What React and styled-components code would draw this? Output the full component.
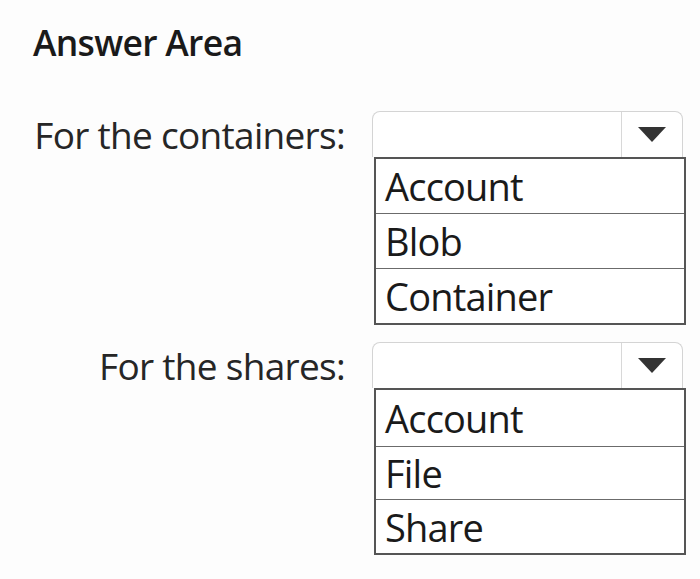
import React from "react";
import styled, { createGlobalStyle } from "styled-components";

const Global = createGlobalStyle`
  html, body {
    margin: 0;
    padding: 0;
    background: #fdfdfd;
  }
  body {
    font-family: "Open Sans", "Noto Sans", "Liberation Sans", sans-serif;
    color: #1c1c1c;
  }
`;

const Page = styled.div`
  width: 700px;
  height: 579px;
  box-sizing: border-box;
  padding: 20px 0 0 33px;
  overflow: hidden;
`;

const Title = styled.h2`
  margin: 0 0 47px 0;
  font-size: 35.5px;
  font-weight: 600;
  line-height: 44px;
  letter-spacing: -0.7px;
  color: #1a1a1a;
`;

const Fields = styled.div`
  display: flex;
  flex-direction: column;
  gap: 17px;
`;

const Field = styled.div`
  display: grid;
  grid-template-columns: 312px 314px;
  column-gap: 27px;
  align-items: start;
`;

const Label = styled.div`
  height: 46px;
  display: flex;
  align-items: center;
  justify-content: flex-end;
  font-size: 37px;
  letter-spacing: -0.7px;
  color: #262626;
  white-space: nowrap;
`;

const Dropdown = styled.div`
  display: flex;
  flex-direction: column;
`;

const Select = styled.div`
  height: 46px;
  width: 311px;
  box-sizing: border-box;
  border: 1px solid #d4d4d4;
  border-bottom: none;
  border-radius: 8px 8px 0 0;
  background: #fff;
  display: flex;
  justify-content: flex-end;
`;

const Arrow = styled.div`
  width: 61px;
  border-left: 1.5px solid #d8d8d8;
  display: flex;
  justify-content: center;
  padding-top: 15px;
  box-sizing: border-box;
`;

const Options = styled.div`
  margin-left: 2px;
  width: 312px;
  box-sizing: border-box;
  border: 2px solid #555;
  background: #fff;
`;

const Option = styled.div`
  height: ${(p) => p.$h}px;
  box-sizing: border-box;
  padding-left: 9px;
  display: flex;
  align-items: center;
  font-size: 38px;
  letter-spacing: -0.8px;
  color: #1a1a1a;
  & + & {
    border-top: 1.5px solid #6b6b6b;
  }
`;

const Caret = () => (
  <svg width="28" height="15" viewBox="0 0 28 15">
    <polygon points="0,0 28,0 14,15" fill="#333" />
  </svg>
);

const groups = [
  { label: "For the containers:", options: ["Account", "Blob", "Container"], heights: [54, 55, 55] },
  { label: "For the shares:", options: ["Account", "File", "Share"], heights: [56, 53, 54] },
];

export default function App() {
  return (
    <>
      <Global />
      <Page>
        <Title>Answer Area</Title>
        <Fields>
          {groups.map((g) => (
            <Field key={g.label}>
              <Label>{g.label}</Label>
              <Dropdown>
                <Select>
                  <Arrow>
                    <Caret />
                  </Arrow>
                </Select>
                <Options>
                  {g.options.map((o, i) => (
                    <Option key={o} $h={g.heights[i]}>
                      {o}
                    </Option>
                  ))}
                </Options>
              </Dropdown>
            </Field>
          ))}
        </Fields>
      </Page>
    </>
  );
}
